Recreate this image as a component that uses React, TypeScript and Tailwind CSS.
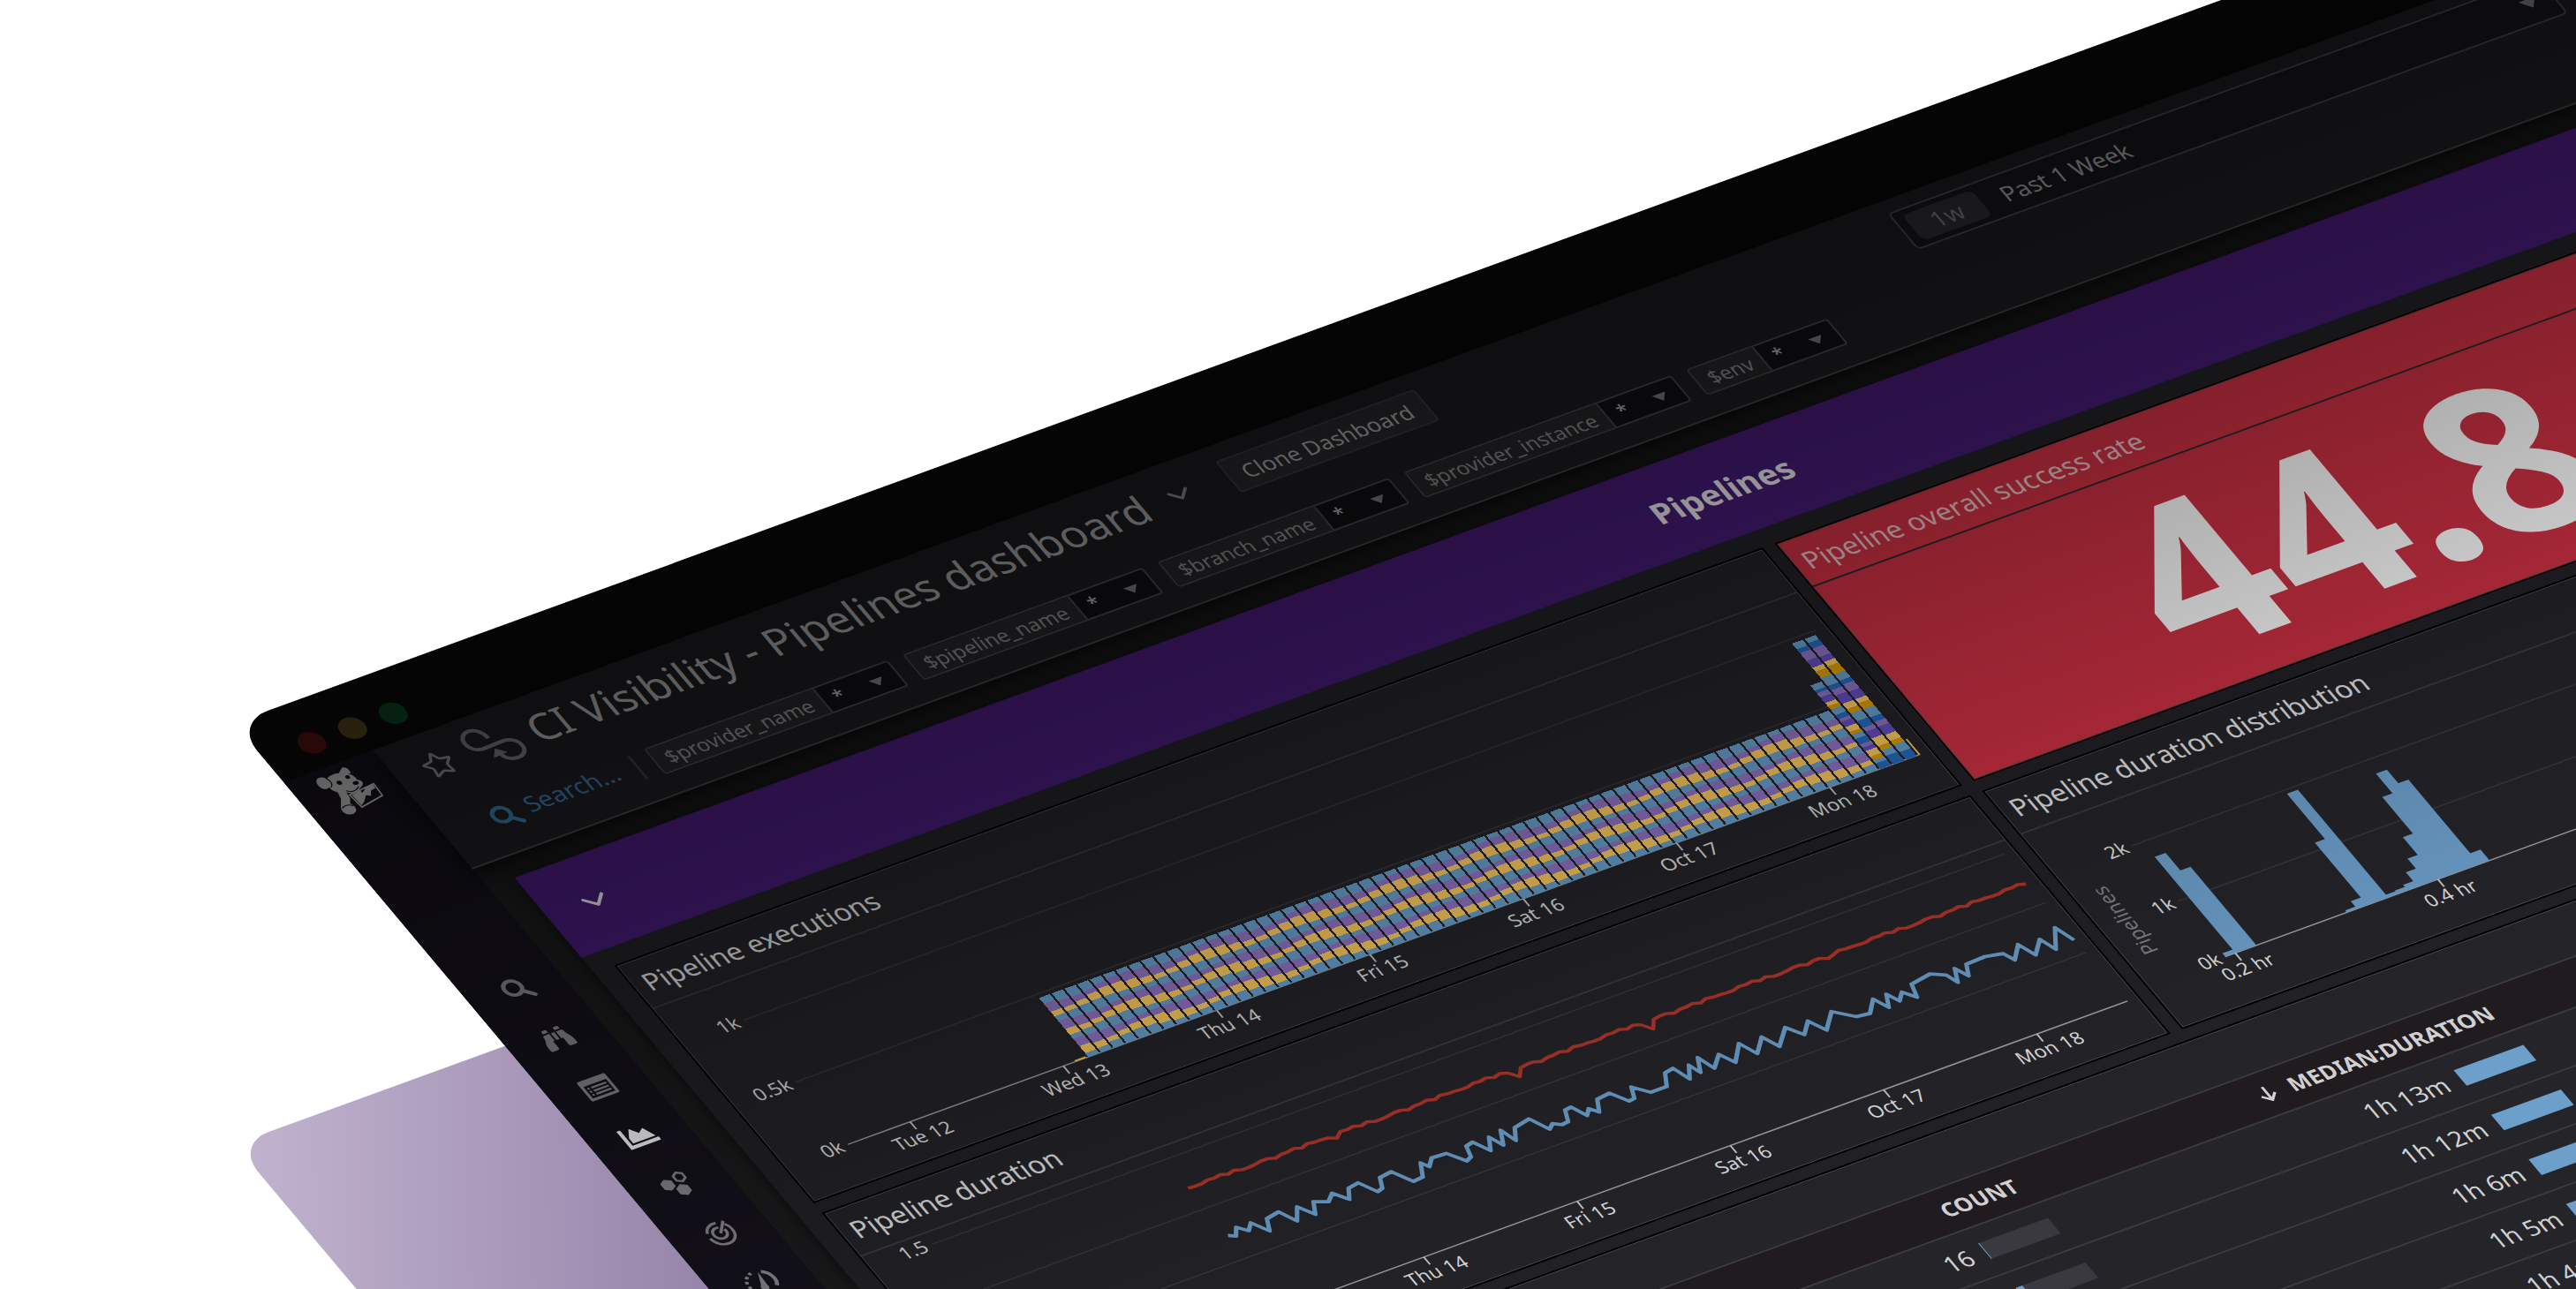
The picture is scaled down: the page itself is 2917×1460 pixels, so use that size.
import type { ReactNode } from 'react'
import { ChevronDown, Star } from 'lucide-react'
import { FaBinoculars, FaChartArea } from 'react-icons/fa'

// ── Data ──────────────────────────────────────────────────────────────────────
const FILTERS = ['$provider_name', '$pipeline_name', '$branch_name', '$provider_instance', '$env']
const DAYS = ['Tue 12', 'Wed 13', 'Thu 14', 'Fri 15', 'Sat 16', 'Oct 17', 'Mon 18']

const ROWS = [
  { name: 'build-and-deploy', count: 16, fill: 1, duration: '1h 13m' },
  { name: 'integration-tests', count: 412, fill: 9, duration: '1h 12m' },
  { name: 'nightly', count: 24, fill: 2, duration: '1h 6m' },
  { name: 'release', count: 31, fill: 2, duration: '1h 5m' },
  { name: 'e2e', count: 18, fill: 1, duration: '1h 4m' },
  { name: 'lint', count: 52, fill: 3, duration: '1h 2m' },
]

// height of every histogram bin, k = 0 at 0.19 hr
const BINS: Record<number, number> = {
  0: 5, 1: 142, 2: 116, 12: 3, 13: 11, 14: 92, 15: 159, 16: 4, 17: 5, 18: 8,
  19: 21, 20: 36, 21: 62, 22: 116, 23: 145, 24: 125, 25: 16,
}

const BLUE_LINE: [number, number][] = [
  [355, 127], [362, 131], [369, 121], [378, 130], [386, 122], [397, 139], [404, 124], [420, 121],
  [430, 139], [441, 123], [452, 139], [460, 124], [474, 130], [484, 122], [495, 136], [503, 123],
  [516, 121], [527, 139], [534, 137], [540, 124], [555, 122], [568, 142], [580, 141], [589, 124],
  [594, 132], [603, 123], [620, 124], [633, 141], [640, 138], [644, 124], [653, 122], [663, 139],
  [672, 123], [679, 138], [688, 120], [694, 138], [703, 123], [723, 119], [734, 139], [741, 134],
  [749, 139], [757, 138], [763, 124], [771, 123], [779, 139], [786, 132], [793, 140], [801, 125],
  [817, 123], [829, 140], [836, 139], [842, 125], [856, 139], [875, 139], [884, 123], [895, 121],
  [902, 140], [912, 124], [917, 137], [926, 119], [933, 138], [948, 124], [957, 140], [975, 120],
  [984, 139], [1001, 122], [1010, 140], [1030, 121], [1042, 137], [1056, 123], [1066, 141],
  [1085, 122], [1104, 138], [1119, 140], [1133, 125], [1141, 141], [1149, 125], [1156, 138],
  [1165, 129], [1175, 141], [1180, 124], [1205, 120], [1219, 128], [1224, 141], [1232, 124],
  [1239, 138], [1246, 124], [1269, 123], [1288, 127], [1294, 139], [1309, 123], [1317, 142],
  [1333, 126], [1340, 144], [1356, 119], [1364, 141],
]

const RED_WIGGLE = [0, -2, 1, 2, -1, 0, -2, 1, -1, -2, 1, 3, -2, 0, 1, -3, 2, -1, 0, 2]
const RED_LINE: [number, number][] = Array.from({ length: 127 }, (_, i) => {
  const dip = i === 22 ? 4 : i === 49 ? 9 : i === 69 ? 10 : i === 96 ? 5 : 0
  return [355 + i * 8, 57 + RED_WIGGLE[(i * 7) % 20] * 0.7 + dip]
})

const toPoints = (list: [number, number][]) => list.map((p) => p.join(',')).join(' ')

// ── Stacked bars ──────────────────────────────────────────────────────────────
const LIGHT = ['#69a2cf', '#9375c6', '#ffcc5f']
const FULL = ['#69a2cf', '#266bc2', '#9375c6', '#664fc1', '#ffcc5f', '#e19f00']

function StackedBar({ index }: { index: number }) {
  const tall = index >= 62
  const height = index === 62 ? 123 : tall ? 178 : 87
  const palette = tall ? FULL : LIGHT
  const count = tall ? 20 : 10
  // shares drift slowly from one bar to the next
  const weights = Array.from({ length: count }, (_, s) => 8 + 3 * Math.sin(index * 0.85 + s * 1.9))
  const total = weights.reduce((a, b) => a + b, 0)
  let y = 233 - height
  return (
    <g shapeRendering="crispEdges">
      {weights.map((w, s) => {
        const h = (w / total) * height
        const top = y
        y += h
        return (
          <rect
            key={s}
            x={364.6 + index * 15.375}
            y={top}
            width={13}
            height={h + 0.4}
            fill={palette[s % palette.length]}
          />
        )
      })}
    </g>
  )
}

// ── Chart parts ───────────────────────────────────────────────────────────────
function Grid({ lines, x1, x2 }: { lines: { y: number; label: string }[]; x1: number; x2: number }) {
  return (
    <g>
      {lines.map(({ y, label }, i) => (
        <g key={label}>
          <line
            x1={x1}
            x2={x2}
            y1={y}
            y2={y}
            stroke={i === lines.length - 1 ? '#a0a0a4' : '#38383d'}
            strokeWidth={1.6}
          />
          <text x={x1 - 6} y={y + 7} textAnchor="end" fill="#dededf" fontSize="22">
            {label}
          </text>
        </g>
      ))}
    </g>
  )
}

function Ticks({ labels, start, step, y }: { labels: string[]; start: number; step: number; y: number }) {
  return (
    <g>
      {labels.map((label, i) => (
        <g key={label}>
          <line x1={start + i * step} x2={start + i * step} y1={y} y2={y + 11} stroke="#c8c8c8" strokeWidth={2} />
          <text x={start + i * step + 1} y={y + 29} textAnchor="middle" fill="#dededf" fontSize="22">
            {label}
          </text>
        </g>
      ))}
    </g>
  )
}

function Panel({ title, red, className = '', children }: {
  title: string
  red?: boolean
  className?: string
  children: ReactNode
}) {
  return (
    <section
      className={`flex flex-col border-2 border-black inset-ring inset-ring-[#505056] ${red ? 'bg-[#cf3144]' : 'bg-[#242429]'} ${className}`}
    >
      <h3
        className={`h-16 border-b-2 px-3 pt-2 text-[31px] leading-[46px] ${red ? 'border-[#2c2c32] text-[#eac4c9]' : 'border-[#3c3c41] text-[#e4e4e6]'}`}
      >
        {title}
      </h3>
      {children}
    </section>
  )
}

// ── Icons ─────────────────────────────────────────────────────────────────────
function DogLogo() {
  return (
    <svg viewBox="-32 -32 64 64" className="size-16">
      <g fill="currentColor">
        <path d="M-14-21C-9-25-2-26 4-24L11-29C15-29 17-25 15-19L12-20C15-17 16-13 16-9 20-7 20-2 15 0L9 3C5 6 0 5-4 1L-5 9-9 15C-6 20-7 27-14 28-21 28-24 22-21 16L-14 6-12-3C-16-6-17-12-15-17z" />
        <path d="M-18-27C-12-27-10-21-13-15-16-10-22-10-24-15-26-21-23-27-18-27z" />
        <path d="M-1 6L11 4 10 8 14 6 17 3 27 2 26 8 20 9 16 15 12 12 6 18 0 22z" />
      </g>
      <path d="M-3 5L28 2 27 19-1 24z" fill="none" stroke="currentColor" strokeWidth="1.800" />
      <g fill="#15121c">
        <circle cx="-3" cy="-13" r="2.800" />
        <circle cx="9" cy="-16" r="2.400" />
        <ellipse cx="12" cy="-6" rx="3.200" ry="2.400" />
      </g>
      <path d="M-12-23C-9-19-10-14-14-11M-3-1C2 4 8 2 12-1M-20 17C-15 14-10 16-8 19" fill="none" stroke="#15121c" strokeWidth="1.200" />
    </svg>
  )
}

function SearchIcon() {
  return (
    <svg viewBox="0 0 34 34" className="size-[34px]" fill="none" stroke="currentColor">
      <circle cx="15" cy="14" r="9.5" strokeWidth="4.5" />
      <path d="M22 21l9 9" strokeWidth="5" strokeLinecap="round" />
    </svg>
  )
}

function LoopIcon() {
  return (
    <svg viewBox="-34 -32 68 64" className="ml-3.5 h-16 w-[68px] text-[#7c7c80]" fill="none" stroke="currentColor">
      <path
        d="M0-9C0-18-6-25-13-25-21-25-26-19-26-12-26-5-20 1-13 1L12 0C20 0 26 6 26 13 26 20 20 25 13 25 5 25 0 20-1 13"
        strokeWidth="4.5"
      />
      <path d="M-9 15L-2 6 6 14z" fill="currentColor" strokeWidth="1" />
    </svg>
  )
}

function ListIcon() {
  return (
    <svg viewBox="0 0 32 32" className="size-9">
      <path d="M3 4h26a2 2 0 012 2v21a2 2 0 01-2 2H3a2 2 0 01-2-2V6a2 2 0 012-2zm1 7v15h24V11z" fill="currentColor" fillRule="evenodd" />
      <path d="M10 14.500h16M10 18.500h16M10 22.500h16M6 14.500h2M6 18.500h2M6 22.500h2" stroke="currentColor" strokeWidth="2.200" />
    </svg>
  )
}

function HexIcon() {
  return (
    <svg viewBox="2 1 34 34" className="size-9" fill="currentColor">
      <path d="M8 7l6.500 3.750v7.500L8 22l-6.500-3.750v-7.500z" />
      <path d="M19 18l6.500 3.750v7.500L19 33l-6.500-3.750v-7.500z" />
      <path d="M24 4l5 3v6l-5 3-5-3V7z" fill="none" stroke="currentColor" strokeWidth="2.500" />
    </svg>
  )
}

function TargetIcon() {
  return (
    <svg viewBox="0 0 34 34" className="size-9" fill="none" stroke="currentColor" strokeWidth="3">
      <path d="M20 4.500A13 13 0 005 13M4 19a13 13 0 0026-1 13 13 0 00-3-9" />
      <path d="M19 10.500a7 7 0 104 4" />
      <path d="M17 17.500L28 5" />
    </svg>
  )
}

function GaugeIcon() {
  return (
    <svg viewBox="0 0 34 34" className="size-9" fill="none" stroke="currentColor">
      <path d="M6 27A14 14 0 0114 4" strokeWidth="3.500" strokeDasharray="3.500 3" />
      <path d="M24 6a14 14 0 014 21" strokeWidth="4" />
      <path d="M21 5l-7 16a4 4 0 106 2z" fill="currentColor" strokeWidth="0" />
    </svg>
  )
}

const NAV: { label: string; icon: ReactNode }[] = [
  { label: 'Search', icon: <SearchIcon /> },
  { label: 'Watchdog', icon: <FaBinoculars className="size-8" /> },
  { label: 'Events', icon: <ListIcon /> },
  { label: 'Dashboards', icon: <FaChartArea className="size-9" /> },
  { label: 'Infrastructure', icon: <HexIcon /> },
  { label: 'Monitors', icon: <TargetIcon /> },
  { label: 'Metrics', icon: <GaugeIcon /> },
]

// ── Window sections ───────────────────────────────────────────────────────────
function Sidebar() {
  return (
    <nav className="flex w-[107px] shrink-0 flex-col items-center bg-[#15121c]">
      <a href="#" aria-label="Home" className="mt-1 text-[#c4c4c6]">
        <DogLogo />
      </a>
      <div className="mt-[226px] flex flex-col">
        {NAV.map(({ label, icon }) => (
          <a
            key={label}
            href="#"
            aria-label={label}
            className={`flex h-[72px] w-[72px] items-center justify-center ${label === 'Dashboards' ? 'text-white' : 'text-[#8b898e]'}`}
          >
            {icon}
          </a>
        ))}
      </div>
    </nav>
  )
}

function Filter({ name }: { name: string }) {
  return (
    <div className="relative flex h-[38px] rounded-sm border-2 border-[#4a4a4e] bg-[#101014]">
      <label htmlFor={name} className="border-r-2 border-[#4a4a4e] bg-[#28282c] px-3 text-[23px] leading-[34px] text-[#929296]">
        {name}
      </label>
      <select id={name} className="w-[88px] appearance-none bg-transparent pl-3 text-[22px] leading-[34px] text-[#c0c0c4]">
        <option>*</option>
      </select>
      <svg viewBox="0 0 16 10" className="pointer-events-none absolute top-3.5 right-4 w-4 text-[#808084]">
        <path d="M0 0h16L8 10z" fill="currentColor" />
      </svg>
    </div>
  )
}

function Header() {
  return (
    <header className="relative border-b-2 border-[#44444a] bg-[#1e1e22] pt-4 pr-[291px] pb-[26px] pl-8 shadow-[0_6px_22px_2px_rgba(0,0,0,0.7)]">
      <div className="flex h-[54px] items-center">
        <button aria-label="Favorite">
          <Star className="size-9 text-[#8c8c90]" strokeWidth={2} />
        </button>
        <LoopIcon />
        <h1 className="ml-2.5 text-5xl whitespace-nowrap text-[#b4b4b6]">CI Visibility - Pipelines dashboard</h1>
        <ChevronDown className="ml-5 size-10 text-[#909094]" strokeWidth={2} />
        <button className="ml-[38px] h-[46px] w-60 rounded-sm border-2 border-[#3e3e42] bg-[#2c2c30] text-[25px] leading-[42px] whitespace-nowrap text-[#bcbcbe]">
          Clone Dashboard
        </button>
        <button className="ml-auto flex h-[54px] w-[784px] items-center rounded-md border-2 border-[#4a4a4e] bg-[#17171b] pl-2.5 text-[27px] text-[#acacb0]">
          <span className="h-[38px] w-[84px] rounded-lg bg-[#303034] leading-[38px] text-[#7c7c80]">1w</span>
          <span className="ml-6">Past 1 Week</span>
          <svg viewBox="0 0 16 10" className="mr-4 ml-auto w-5 text-[#808084]">
            <path d="M0 0h16L8 10z" fill="currentColor" />
          </svg>
        </button>
      </div>
      <div className="mt-10 flex h-[38px] items-center">
        <label htmlFor="search" aria-label="Search" className="ml-[22px] text-[#3b7dae]">
          <SearchIcon />
        </label>
        <input
          id="search"
          placeholder="Search..."
          className="ml-2.5 h-[38px] w-[132px] bg-transparent pb-2 text-[28px] placeholder:text-[#367cb0]"
        />
        <div className="h-[34px] w-[3px] bg-[#3c3c40]" />
        <div className="ml-[18px] flex gap-[18px]">
          {FILTERS.map((name) => (
            <Filter key={name} name={name} />
          ))}
        </div>
      </div>
    </header>
  )
}

function PipelineTable() {
  return (
    <table className="w-full table-fixed border-collapse text-[28px] text-[#d0d0d2]">
      <thead>
        <tr className="h-[57px] border-b-2 border-[#3c3b40] bg-[#1f1b1f] text-right text-[25px]">
          <th className="w-[561px] pl-4 text-left font-bold">PIPELINE</th>
          <th className="w-[573px] pr-3 font-bold">COUNT</th>
          <th className="w-[573px] pr-3 font-bold">
            <span className="flex items-center justify-end gap-4">
              <svg viewBox="0 0 20 22" className="w-5" fill="none" stroke="currentColor" strokeWidth="3">
                <path d="M10 1v19M2 12l8 8 8-8" />
              </svg>
              MEDIAN:DURATION
            </span>
          </th>
          <th />
        </tr>
      </thead>
      <tbody>
        {ROWS.map((row) => (
          <tr key={row.name} className="h-[66px] border-b-2 border-[#3c3b40]">
            <td className="pl-4">{row.name}</td>
            <td className="pr-2">
              <div className="flex items-center justify-end gap-4">
                {row.count}
                <div className="h-[23px] w-[84px] bg-[#3a393f]">
                  <div className="h-full bg-[#6d9fcb]" style={{ width: `${row.fill}%` }} />
                </div>
              </div>
            </td>
            <td className="pr-2">
              <div className="flex items-center justify-end gap-4">
                {row.duration}
                <div className="h-[23px] w-[84px] bg-[#6d9fcb]" />
              </div>
            </td>
            <td />
          </tr>
        ))}
      </tbody>
    </table>
  )
}

function Dashboard() {
  return (
    <main className="bg-[#1c1c1e] pt-[27px] pr-7 pl-8">
      <div className="bg-[#222227] shadow-[0_0_18px_rgba(0,0,0,0.6)]">
        <div className="relative flex h-[118px] items-center justify-center bg-[#481c7a]">
          <button aria-label="Collapse group" className="absolute left-[35px]">
            <ChevronDown className="size-11 text-[#f0ecf4]" strokeWidth={2} />
          </button>
          <h2 className="text-[37px] font-bold text-[#f4f2f6]">Pipelines</h2>
        </div>

        <div className="grid grid-cols-2 gap-3.5 px-6 pt-[22px] pb-6">
          <Panel title="Pipeline executions">
            <svg viewBox="0 0 1378 284" className="w-full">
              <Grid
                x1={75}
                x2={1366}
                lines={[
                  { y: 49.5, label: '1k' },
                  { y: 141, label: '0.5k' },
                  { y: 233, label: '0k' },
                ]}
              />
              <Ticks labels={DAYS} start={150} step={184.5} y={233} />
              <rect x={349} y={231} width={13} height={2} fill="#ffcc5f" />
              {Array.from({ length: 65 }, (_, i) => (
                <StackedBar key={i} index={i} />
              ))}
              <rect x={1364} y={210} width={2} height={23} fill="#ffcc5f" />
            </svg>
          </Panel>

          <Panel title="Pipeline overall success rate" red>
            <p className="pl-[291px] text-[264px] leading-[270px] font-bold text-white [font-kerning:none]">44.8</p>
          </Panel>

          <Panel title="Pipeline duration">
            <svg viewBox="0 0 1378 284" className="w-full">
              <Grid
                x1={75}
                x2={1366}
                lines={[
                  { y: 15, label: '1.5' },
                  { y: 87, label: '1' },
                  { y: 160, label: '0.5' },
                  { y: 232, label: '0' },
                ]}
              />
              <Ticks labels={DAYS} start={150} step={184.5} y={232} />
              <polyline points={toPoints(RED_LINE)} fill="none" stroke="#b3362a" strokeWidth={4} strokeLinejoin="round" />
              <polyline points={toPoints(BLUE_LINE)} fill="none" stroke="#6b9ec9" strokeWidth={4.5} strokeLinejoin="round" />
            </svg>
          </Panel>

          <Panel title="Pipeline duration distribution">
            <svg viewBox="0 0 1378 284" className="w-full">
              <Grid
                x1={94}
                x2={1370}
                lines={[
                  { y: 58, label: '2k' },
                  { y: 140, label: '1k' },
                  { y: 222, label: '0k' },
                ]}
              />
              {Object.entries(BINS).map(([k, h]) => (
                <rect key={k} x={94 + Number(k) * 12.2} y={222 - h} width={13.2} height={h} fill="#6b9dc8" />
              ))}
              <Ticks labels={['0.2 hr', '0.4 hr', '0.6 hr', '0.8 hr', '1 hr']} start={106} step={244} y={222} />
              <text transform="translate(38 140) rotate(-90)" textAnchor="middle" fill="#808084" fontSize="23">
                Pipelines
              </text>
            </svg>
          </Panel>

          <Panel title="Pipeline details" className="col-span-2">
            <PipelineTable />
          </Panel>
        </div>
      </div>
    </main>
  )
}

// ── Page ──────────────────────────────────────────────────────────────────────
export default function App() {
  return (
    <div className="relative h-screen overflow-hidden bg-white font-['Noto_Sans',sans-serif]">
      {/* backing plane */}
      <div className="absolute top-[1296px] left-[266px] h-[1700px] w-full origin-top-left transform-[matrix(0.9397,-0.342,0.6428,0.766,0,0)] rounded-[40px] bg-[linear-gradient(124deg,#c2b4cf_0px,#9885ab_460px,#7c5f96_900px)]" />

      {/* app window */}
      <div className="absolute top-[819px] left-[265px] w-[calc(100%+79px)] origin-top-left transform-[matrix(0.9397,-0.342,0.6428,0.766,0,0)] overflow-hidden rounded-[40px] bg-[#0b0b0b]">
        <div className="flex h-[88px] items-center gap-5 pt-5 pl-[42px]">
          <span className="size-[29px] rounded-full bg-[#571010]" />
          <span className="size-[29px] rounded-full bg-[#54441a]" />
          <span className="size-[29px] rounded-full bg-[#0b4520]" />
        </div>
        <div className="flex">
          <Sidebar />
          <div className="min-w-0 flex-1">
            <Header />
            <Dashboard />
          </div>
        </div>
        {/* light falls off towards the top edge */}
        <div className="pointer-events-none absolute inset-0 bg-[linear-gradient(180deg,rgba(0,0,0,0.55)_0px,rgba(0,0,0,0)_1250px)]" />
      </div>
    </div>
  )
}
